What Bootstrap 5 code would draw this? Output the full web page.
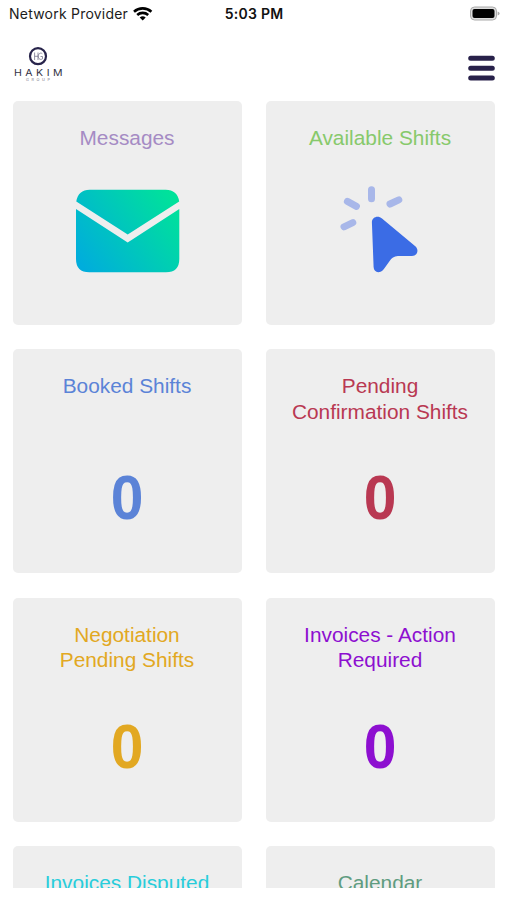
<!DOCTYPE html>
<html lang="en">
<head>
<meta charset="utf-8">
<meta name="viewport" content="width=device-width, initial-scale=1">
<title>Hakim Group</title>
<link href="https://cdn.jsdelivr.net/npm/bootstrap@5.3.0/dist/css/bootstrap.min.css" rel="stylesheet">
<style>
body { font-family: "Liberation Sans", Arial, sans-serif; background: #fff; }
.screen { height: 888px; }
.status { height: 28px; padding: 0 7px 0 9px; font: 500 14px/28px Inter, sans-serif; color: #1c1c1c; }
.status .provider { font-weight: 400; letter-spacing: .22px; }
.status .clock { font-weight: 600; letter-spacing: .25px; color: #111; margin-right: 1px; }
.side { flex: 1 1 0; }
.topbar { height: 73px; padding: 18px 12px 0 13px; }
.menu-btn { width: 27px; margin-top: 9px; }
.tiles { padding: 0 12px 0 13px; column-gap: 24px; row-gap: 24.3px; display: grid; grid-template-columns: 1fr 1fr; }
.tile { height: 224px; background: #eee; border-radius: 5px; padding-top: 24px; }
.tile-title { font-size: 20.85px; line-height: 25.8px; height: 52px; margin: 0; padding-right: 1px; font-weight: 400; }
.count { font-size: 62.5px; line-height: 62px; font-weight: 700; margin-top: 41px; padding-right: 1px; transform: scaleX(.94); }
.c-messages { color: #a58bc4; } .c-available { color: #87c96b; }
.c-booked { color: #5b83d7; } .c-pending { color: #b93852; }
.c-negotiation { color: #e2a822; } .c-action { color: #8d0fd0; }
.c-disputed { color: #28cddb; } .c-calendar { color: #5f9c80; }
</style>
</head>
<body>
<div class="screen overflow-hidden">
  <div class="status d-flex align-items-center">
    <div class="side d-flex align-items-center">
      <span class="provider text-nowrap">Network Provider</span>
      <svg class="ms-1" width="22" height="17" viewBox="0 0 22 17" fill="none" stroke="#000" stroke-width="2.6">
        <path d="M2 5.700a13 13 0 0 1 17.400 0M5.200 9a8.300 8.300 0 0 1 11 0"/>
        <path d="M10.700 14.600l-3-3a4.400 4.400 0 0 1 6 0z" fill="#000" stroke="none"/>
      </svg>
    </div>
    <span class="clock">5:03 PM</span>
    <div class="side d-flex justify-content-end">
      <svg width="31" height="16" viewBox="0 0 31 16">
        <rect x="1.500" y="1" width="26" height="13" rx="4" fill="#ddd" stroke="#aaa"/>
        <rect x="3.500" y="3" width="22" height="9" rx="2" fill="#000"/>
        <path d="M28.600 5.500q2 .6 2 2t-2 2z" fill="#aaa"/>
      </svg>
    </div>
  </div>
  <header class="topbar d-flex justify-content-between align-items-start">
    <svg width="50" height="38" viewBox="0 0 50 38" role="img" aria-label="Hakim Group">
      <circle cx="25" cy="10.200" r="8" fill="#fff" stroke="#28244b" stroke-width="2.200"/>
      <path d="M21.600 6.500v7.500M25 6.500v7.500M21.600 10.300H25M29.300 7.700c-2-1.600-4 .2-4 2.600s2 4 4.200 2.500v-2.300h-2" fill="none" stroke="#77758d" stroke-width=".8"/>
      <g transform="translate(1 29.600) scale(1.200 1)"><text font-family="Inter, sans-serif" font-size="8.800" fill="#333144" textLength="40.500">HAKIM</text></g>
      <text x="13" y="34.600" font-family="Inter, sans-serif" font-size="3.800" fill="#777586" textLength="24">GROUP</text>
    </svg>
    <button class="menu-btn btn p-0 border-0 d-flex" aria-label="Menu">
      <svg width="27" height="27" viewBox="0 0 27 27" stroke="#28214a" stroke-width="5" stroke-linecap="round"><path d="M2.700 3.300h21.600M2.700 13.200h21.600M2.700 23h21.600"/></svg>
    </button>
  </header>
  <main class="tiles text-center">
    <section class="tile c-messages">
      <h2 class="tile-title">Messages</h2>
      <svg class="d-block mx-auto mt-2" width="104" height="92" viewBox="0 0 104 92">
        <defs><linearGradient id="mail" gradientUnits="userSpaceOnUse" x1="5" y1="80" x2="98" y2="14"><stop offset="0" stop-color="#00addc"/><stop offset="1" stop-color="#00e29a"/></linearGradient></defs>
        <path fill="url(#mail)" d="M.300 16.400Q2.300 4.800 13.700 4.800h76q11.500 0 13.500 11.600L51.700 49.500zM0 24L51.700 57.400 103.300 24v50q0 13.300-13.300 13.300H13.300Q0 87.300 0 74z"/>
      </svg>
    </section>
    <section class="tile c-available">
      <h2 class="tile-title">Available Shifts</h2>
      <svg class="d-block mx-auto mt-2" width="104" height="92" viewBox="1 0 104 92">
        <g stroke="#a8b7e9" stroke-width="7" stroke-linecap="round"><path d="M43.500 4.800v9M19.400 16.400l9 5M62 19l8.800-4.200M16 41.800l8.800-4.200"/></g>
        <path fill="#3b6ce5" d="M43.900 37.500C43.800 32 50 30 54 33.400L87.300 61.300C91.500 65 89 71 84 71H71.500C67 71 64.800 72 62 75.500L55.900 83.900C52 89 45.900 88 45.600 82z"/>
      </svg>
    </section>
    <section class="tile c-booked"><h2 class="tile-title">Booked Shifts</h2><div class="count">0</div></section>
    <section class="tile c-pending"><h2 class="tile-title">Pending<br>Confirmation Shifts</h2><div class="count">0</div></section>
    <section class="tile c-negotiation"><h2 class="tile-title">Negotiation<br>Pending Shifts</h2><div class="count">0</div></section>
    <section class="tile c-action"><h2 class="tile-title">Invoices - Action<br>Required</h2><div class="count">0</div></section>
    <section class="tile c-disputed"><h2 class="tile-title">Invoices Disputed</h2></section>
    <section class="tile c-calendar"><h2 class="tile-title">Calendar</h2></section>
  </main>
</div>
<script src="https://cdn.jsdelivr.net/npm/bootstrap@5.3.0/dist/js/bootstrap.bundle.min.js"></script>
</body>
</html>
